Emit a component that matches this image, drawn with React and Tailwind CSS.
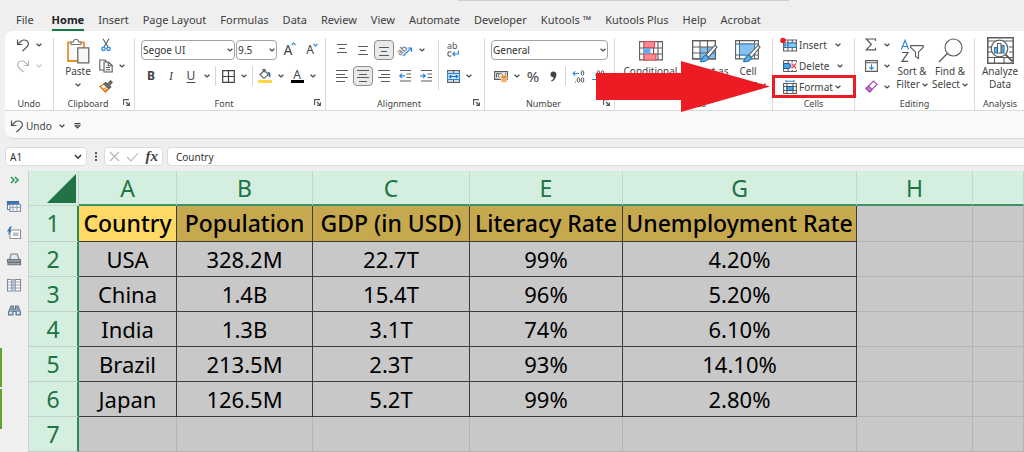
import React from "react";

const TABS = ["File", "Home", "Insert", "Page Layout", "Formulas", "Data", "Review", "View", "Automate", "Developer", "Kutools ™", "Kutools Plus", "Help", "Acrobat"];

const COLUMNS = ["A", "B", "C", "E", "G", "H", ""];

const ROWS = [
  ["Country", "Population", "GDP (in USD)", "Literacy Rate", "Unemployment Rate"],
  ["USA", "328.2M", "22.7T", "99%", "4.20%"],
  ["China", "1.4B", "15.4T", "96%", "5.20%"],
  ["India", "1.3B", "3.1T", "74%", "6.10%"],
  ["Brazil", "213.5M", "2.3T", "93%", "14.10%"],
  ["Japan", "126.5M", "5.2T", "99%", "2.80%"],
  [],
];

function Svg({ w, h, children, className = "" }) {
  return (
    <svg width={w} height={h} viewBox={`0 0 ${w} ${h}`} fill="none" stroke="#5c5c5c" strokeWidth="1.1" className={`shrink-0 overflow-visible ${className}`} aria-hidden="true">
      {children}
    </svg>
  );
}

function Chevron({ color = "#444" }) {
  return (
    <Svg w={6} h={4}>
      <path d="M.6.7 3 3 5.400.7" stroke={color} strokeWidth="1.2" />
    </Svg>
  );
}

function Drop({ label, color }) {
  return (
    <button aria-label={label} className="flex h-5 w-3 shrink-0 items-center justify-center">
      <Chevron color={color} />
    </button>
  );
}

function Tool({ label, active, children }) {
  return (
    <button
      aria-label={label}
      className={`flex h-5 w-5 shrink-0 items-center justify-center ${active ? "rounded border border-[#8f8f8f] bg-[#e9e9e9]" : ""}`}
    >
      {children}
    </button>
  );
}

function Rule({ className = "h-5" }) {
  return <div className={`mx-0.5 w-px shrink-0 bg-[#d6d6d6] ${className}`} />;
}

function Combo({ label, value, className }) {
  return (
    <div className={`relative h-5 shrink-0 ${className}`}>
      <select aria-label={label} className="block h-full w-full appearance-none rounded border border-[#a3a3a3] bg-white pl-px text-[10px] leading-4 text-[#333]">
        <option>{value}</option>
      </select>
      <span className="pointer-events-none absolute inset-y-0 right-0.5 flex items-center">
        <Chevron />
      </span>
    </div>
  );
}

function Group({ title, className, launcher, children }) {
  return (
    <section aria-label={title} className={`relative flex shrink-0 flex-col ${className}`}>
      <div className="flex h-[63px]">{children}</div>
      <div className={`flex h-3.5 items-center justify-center text-[9px] leading-none text-[#444] ${launcher ? "pr-3" : ""}`}>{title}</div>
      {launcher && (
        <button aria-label={`${title} settings`} className="absolute right-1 bottom-1">
          <Svg w={7} h={7} className="block">
            <path d="M.6 6V.6H6M3 3l3 3M6.4 3.2v3.2H3.2" stroke="#555" />
          </Svg>
        </button>
      )}
    </section>
  );
}

function Divider() {
  return <div className="mt-1 h-[73px] w-px shrink-0 bg-[#d9d9d9]" />;
}

function BigButton({ icon, lines, drop, className = "" }) {
  return (
    <button className={`flex shrink-0 flex-col items-center text-[10px] leading-[13px] text-[#444] ${className}`}>
      <span className="flex h-[29px] items-center">{icon}</span>
      <span className="whitespace-nowrap">{lines[0]}</span>
      <span className="flex h-[13px] items-center gap-0.5 whitespace-nowrap">
        {lines[1]}
        {drop && <Chevron />}
      </span>
    </button>
  );
}

function UndoIcon() {
  return (
    <Svg w={14} h={14}>
      <path d="M1.5 1.5v5h5M1.8 6.2 5 3.2C7.500 1 12.400 2 12.400 5.800c0 3-3.400 4.600-6 7.200" stroke="#555" strokeWidth="1.2" />
    </Svg>
  );
}

function RedoIcon() {
  return (
    <Svg w={14} h={14}>
      <path d="M12.500 1.500v5h-5M12.200 6.200 9 3.200C6.500 1 1.600 2 1.600 5.800c0 3 3.400 4.600 6 7.200" stroke="#b9b9b9" strokeWidth="1.2" />
    </Svg>
  );
}

function PasteIcon() {
  return (
    <Svg w={24} h={26}>
      <path d="M2 4.500h16V23H2z" fill="#fff" stroke="#e8912d" strokeWidth="1.800" />
      <path d="M4.500 6.500h11v14h-11z" fill="#fafafa" stroke="none" />
      <path d="M5 6.500V4h2.500c.2-3.600 4.800-3.600 5 0H15v2.500z" fill="#fff" stroke="#777" />
      <path d="M11.800 9.800h11v15h-11z" fill="#f7f7f7" stroke="#666" strokeWidth="1.300" />
    </Svg>
  );
}

function CutIcon() {
  return (
    <Svg w={10} h={14}>
      <path d="M2 .8 7 9M8 .8 3 9" />
      <circle cx="2.500" cy="10.800" r="1.700" stroke="#2b88d8" strokeWidth="1.300" />
      <circle cx="7.500" cy="10.800" r="1.700" stroke="#2b88d8" strokeWidth="1.300" />
    </Svg>
  );
}

function CopyIcon() {
  return (
    <Svg w={14} h={14}>
      <path d="M5 11H.8V1H6l1 1v1" />
      <path d="M5 3h4.500l3.700 3.500V13H5z" fill="#f4f4f4" />
      <path d="M9.300 3v3.700h3.900M7 8.500h4M7 10.700h4" />
    </Svg>
  );
}

function PainterIcon() {
  return (
    <Svg w={14} h={13}>
      <path d="M1 6.500 5 4l5 4.500L6.500 12z" fill="#fff" stroke="#e07b1a" strokeWidth="1.300" />
      <path d="m3.500 9.500 4-2M5 11l3.500-2" stroke="#e07b1a" />
      <path d="m5 4 1.700-1.500L8.500 4 11.600.8l1.600 1.400-2.700 3.300 1.300 1.500L10 8.500z" fill="#777" />
    </Svg>
  );
}

function LettersA({ up }) {
  return (
    <span className="relative flex items-center text-[#444]">
      <span className={up ? "text-[14px] leading-none" : "text-[12px] leading-none"}>A</span>
      <Svg w={5} h={4} className="absolute -top-px -right-1">
        <path d={up ? "M.6 3 2.500 1l1.900 2" : "M.6 1l1.900 2L4.400 1"} stroke="#2b88d8" />
      </Svg>
    </span>
  );
}

function BordersIcon() {
  return (
    <Svg w={13} h={13}>
      <path d="M.7.7h11.600v11.600H.7zM6.500.7v11.600M.7 6.500h11.600" stroke="#444" strokeWidth="1.200" />
    </Svg>
  );
}

function FillIcon() {
  return (
    <Svg w={14} h={14}>
      <path d="m2 5.500 4.500-4 4 4L6 9.300z" fill="#fff" />
      <path d="M5 3V.6h2v3" />
      <path d="M10 3.500c1.500 0 2 1.500 1.500 4.500" stroke="#1f5f9e" strokeWidth="1.500" />
      <path d="M0 11h14v3H0z" fill="#ffd54a" stroke="none" />
    </Svg>
  );
}

function FontColorIcon() {
  return (
    <span className="flex flex-col items-center">
      <span className="text-[12px] leading-[11px] text-[#444]">A</span>
      <span className="h-[3px] w-[13px] bg-black" />
    </span>
  );
}

function LinesIcon({ rows }) {
  return (
    <Svg w={12} h={12}>
      {rows.map(([x1, x2, y]) => (
        <path key={y} d={`M${x1} ${y}.500H${x2}`} stroke="#5a5a5a" strokeWidth="1" />
      ))}
    </Svg>
  );
}

function IndentIcon({ inward }) {
  return (
    <Svg w={13} h={12}>
      <path d="M1 .5h11M7.500 4h4.500M7.500 7.500h4.500M1 11h11" />
      <path d={inward ? "M0 5.800h5M3 3.600l2.300 2.200L3 8" : "M6 5.800H1M3 3.600.7 5.800 3 8"} stroke="#2b88d8" strokeWidth="1.200" />
    </Svg>
  );
}

function OrientationIcon() {
  return (
    <Svg w={15} h={13}>
      <text x="0" y="9" fontSize="9" fill="#555" stroke="none" transform="rotate(-42 5 8)">ab</text>
      <path d="M5 12 13 4.500M9.500 4h4v4" stroke="#2b88d8" strokeWidth="1.200" />
    </Svg>
  );
}

function WrapIcon() {
  return (
    <Svg w={12} h={14}>
      <text x="0" y="6" fontSize="9" fill="#555" stroke="none">ab</text>
      <path d="M4.300 9.200C2.600 8.200.8 9.200.8 11s1.800 2.800 3.500 1.800" stroke="#555" />
      <path d="M11.300 7.500v3.500H6M8 8.800l-2.200 2.200L8 13.200" stroke="#2b88d8" strokeWidth="1.200" />
    </Svg>
  );
}

function MergeIcon() {
  return (
    <Svg w={13} h={13}>
      <path d="M.6.6h11.800v11.800H.6zM6.500.6v3M6.500 9.400v3" />
      <path d="M.6 3.400h11.800v6.200H.6z" fill="#cfe6f8" stroke="#2b88d8" />
      <path d="M2.500 6.500h8M4.200 4.800 2.500 6.500l1.700 1.700M8.800 4.800l1.700 1.700-1.700 1.700" stroke="#1c6fb8" />
    </Svg>
  );
}

function CurrencyIcon() {
  return (
    <Svg w={14} h={13}>
      <path d="M.6 1.600h12.800v7.800H.6z" fill="#eee" />
      <path d="M2.500 3.500v4M5 3.500h-2.500M5.500 7.500c-2-1-1-4 1-4s3 2 2 4M11.500 3.500v3" strokeWidth="1" />
      <path d="M7 6.500c0-2 6-2 6 0v4.500c0 2-6 2-6 0z" fill="#ee8a28" stroke="#fff" strokeWidth=".6" />
      <path d="M7.500 8.300c1 .9 4 .9 5 0M7.500 10.300c1 .9 4 .9 5 0" stroke="#fff" strokeWidth=".7" />
    </Svg>
  );
}

function Zero({ x, y }) {
  return <ellipse cx={x + 1.5} cy={y + 2.5} rx="1.3" ry="2.300" stroke="#555" strokeWidth="1" />;
}

function DecimalIcon({ more }) {
  return (
    <Svg w={13} h={13}>
      {more ? (
        <>
          <path d="M7 3.500H1M3.200 1.300 1 3.500l2.200 2.200" stroke="#2b88d8" />
          <Zero x={9} y={0.5} />
          <Zero x={5} y={7.5} />
          <Zero x={9} y={7.5} />
          <path d="M3 12h1" />
        </>
      ) : (
        <>
          <Zero x={5} y={0.5} />
          <Zero x={9} y={0.5} />
          <Zero x={9} y={7.5} />
          <path d="M3 5h1M7.500 12h1" />
          <path d="M0 9.500h6M4 7.300l2.200 2.200L4 11.700" stroke="#2b88d8" />
        </>
      )}
    </Svg>
  );
}

function ConditionalIcon() {
  return (
    <Svg w={24} h={20}>
      <path d="M.6.6h22.800v18.300H.6zM5 .6v18.300M14.500.6v18.300M19 .6v18.300M.6 7h22.800M.6 13h22.800" />
      <path d="M5 .6h10.500v6H5zM5 13h12v6H5z" fill="#ff8a8f" stroke="#e04c55" />
      <path d="M5 7.200h6.500v5.500H5z" fill="#5fb0ea" stroke="none" />
    </Svg>
  );
}

function Brush() {
  return (
    <>
      <path d="M14 16 23 6.200l2 1.800-8.500 10.500z" fill="#fff" stroke="#555" />
      <path d="M8 22.200c2.500-.3 1.500-5 5.200-5.700 2.300-.2 4 2.200 2.500 4-1.700 2.200-5 2.500-7.700 1.700z" fill="#5aaeea" stroke="#2170ad" />
    </>
  );
}

function TableBrushIcon() {
  return (
    <Svg w={26} h={24}>
      <path d="M.6 1.600h22.800v18.300H.6z" fill="#fff" />
      <path d="M8 8h15.400v11.900H8z" fill="#84c1f0" stroke="none" />
      <path d="M.6 8h22.800M.6 14h22.800M8 1.600v18.300M15.500 1.600v18.300M.6 1.600h22.800v18.300H.6z" />
      <Brush />
    </Svg>
  );
}

function CellBrushIcon() {
  return (
    <Svg w={26} h={24}>
      <path d="M.6 1.600h22.800v18.300H.6zM.6 5h22.800M.6 16h22.800M4.500 1.600v18.300M19.500 1.600v18.300" />
      <path d="M4.500 5h15v11h-15z" fill="#84c1f0" stroke="#3585c6" />
      <Brush />
    </Svg>
  );
}

function InsertCellsIcon() {
  return (
    <Svg w={16} h={14}>
      <path d="M2.600 2h12.800v11H2.600zM2.600 5h12.800M2.600 9.500h12.800M7 2v11M11.200 2v11" />
      <path d="M7 5h8.400v4.500H7z" fill="#8cc6f2" stroke="#2b78b8" />
      <path d="M7.500 7.300H3M5 5.300 3 7.300l2 2" stroke="#2b88d8" />
      <circle cx="2" cy="2.500" r="2.800" fill="#ed1c24" stroke="none" />
    </Svg>
  );
}

function DeleteCellsIcon() {
  return (
    <Svg w={16} h={14}>
      <path d="M2.600 1.500h12.800M2.600 12.500h12.800M2.600 1.500v3M7 1.500v3M11.200 1.500v2M15.400 1.500v2M2.600 9.500v3M7 9.500v3M11.200 11v1.500M15.400 11v1.500" />
      <path d="M2.600 4.500h5.500L10 7 8.100 9.500H2.600z" fill="#4ea4e2" stroke="#1d5f9a" />
      <path d="m10.500 4.500 4.500 5M15 4.500l-4.500 5" stroke="#e5484d" strokeWidth="1.200" />
    </Svg>
  );
}

function FormatCellsIcon() {
  return (
    <Svg w={16} h={14}>
      <path d="M2.600 3.500h12.800v10H2.600zM2.600 6.500h12.800M2.600 10.500h12.800M6 3.500v10M12 3.500v10" />
      <path d="M6 6.500h6v4H6z" fill="#4ea4e2" stroke="#1d5f9a" />
      <path d="M5 1.200h8M5 0v2.500M13 0v2.500" stroke="#2b88d8" />
    </Svg>
  );
}

function SumIcon() {
  return (
    <Svg w={12} h={13}>
      <path d="M10.500 3V1H1.300l5 5.300-5 5.500h9.200v-2" stroke="#555" strokeWidth="1.200" />
    </Svg>
  );
}

function FillDownIcon() {
  return (
    <Svg w={13} h={12}>
      <path d="M.6.6h11.800v10.800H.6zM.6 2.800h11.800" />
      <path d="M6.500 4.200v5M4.300 7.200l2.200 2.200 2.200-2.200" stroke="#2b88d8" strokeWidth="1.200" />
    </Svg>
  );
}

function EraserIcon() {
  return (
    <Svg w={13} h={13}>
      <path d="M1 8.500 8.500 1 12 4.200 4.800 12z" fill="#fff" stroke="#a04ab0" />
      <path d="M1 8.500 3.500 6l3.700 3.400L4.800 12z" fill="#c77fd3" stroke="#a04ab0" />
    </Svg>
  );
}

function SortFilterIcon() {
  return (
    <Svg w={24} h={24}>
      <path d="M1.300 10.500 5 1.300l3.700 9.200M2.600 7.500h4.800" stroke="#2b88d8" strokeWidth="1.200" />
      <path d="M2 13.500h6L2 22.300h6.200" stroke="#555" strokeWidth="1.200" />
      <path d="M10.500 6.600h12.700v1.600l-4.700 5v6.300l-3-2v-4.300l-5-5z" fill="#fff" />
    </Svg>
  );
}

function FindIcon() {
  return (
    <Svg w={25} h={25}>
      <circle cx="15.500" cy="9.500" r="8.500" fill="#fdfdfd" />
      <path d="M9.300 15.500 1 24" strokeWidth="1.300" />
    </Svg>
  );
}

function AnalyzeIcon() {
  return (
    <Svg w={27} h={27}>
      <path d="M.8.8h25.400v25.400H.8z" fill="#fff" strokeWidth="1.500" />
      <path d="M.8 4h25.400M.8 10h4M.8 15h5M.8 20.500h25.400M7.500 20v6M17 20v6M22 10h4M22 15h4" />
      <circle cx="12.500" cy="11.500" r="8.300" fill="#fff" strokeWidth="1.200" />
      <path d="m18.500 17.500 7 7" strokeWidth="1.800" />
      <path d="M7.500 10.500h3V16h-3zM14 8.500h3V16h-3z" fill="#5fb0ea" stroke="#2b78b8" />
      <path d="M10.500 6.500H14V16h-3.500z" fill="#fff" />
    </Svg>
  );
}

const ALIGN = {
  top: [[1, 11, 0], [3, 9, 4], [1, 11, 8]],
  middle: [[1, 11, 2], [3, 9, 6], [1, 11, 10]],
  bottom: [[1, 11, 3], [3, 9, 7], [1, 11, 11]],
  left: [[0, 12, 0], [0, 9, 4], [0, 12, 7], [0, 9, 11]],
  center: [[0, 12, 0], [2, 10, 4], [0, 12, 7], [2, 10, 11]],
  right: [[0, 12, 0], [3, 12, 4], [0, 12, 7], [3, 12, 11]],
};

function CellAction({ icon, label, wide }) {
  return (
    <button className={`flex h-[21px] items-center text-[10px] leading-none text-[#444] ${wide ? "gap-2" : "gap-0.5"}`}>
      <span className="flex items-center gap-0.5">
        {icon}
        {label}
      </span>
      <Chevron />
    </button>
  );
}

function Ribbon() {
  return (
    <div className="relative flex h-20 rounded-tl-lg border-b border-[#dadada] bg-white pt-[3px]">
      <Group title="Undo" className="w-12">
        <div className="flex flex-col pl-2">
          <div className="flex h-[21px] items-center">
            <Tool label="Undo"><UndoIcon /></Tool>
            <Drop label="Undo history" />
          </div>
          <div className="flex h-[21px] items-center">
            <Tool label="Redo"><RedoIcon /></Tool>
            <Drop label="Redo history" color="#c4c4c4" />
          </div>
        </div>
      </Group>
      <Divider />
      <Group title="Clipboard" className="w-20" launcher>
        <BigButton className="ml-2.5 w-7 pt-0.5" icon={<PasteIcon />} lines={["Paste", ""]} drop />
        <div className="flex flex-col pl-1">
          <div className="flex h-[21px] items-center"><Tool label="Cut"><CutIcon /></Tool></div>
          <div className="flex h-[21px] items-center"><Tool label="Copy"><CopyIcon /></Tool><Drop label="Copy options" /></div>
          <div className="flex h-[21px] items-center"><Tool label="Format Painter"><PainterIcon /></Tool></div>
        </div>
      </Group>
      <Divider />
      <Group title="Font" className="w-[190px]" launcher>
        <div className="flex flex-col gap-1.5 pt-1.5 pl-1.5">
          <div className="flex items-center gap-px">
            <Combo label="Font name" value="Segoe UI" className="w-[94px]" />
            <Combo label="Font size" value="9.5" className="w-[41px]" />
            <div className="flex gap-0.5">
              <Tool label="Increase font size"><LettersA up /></Tool>
              <Tool label="Decrease font size"><LettersA /></Tool>
            </div>
          </div>
          <div className="flex items-center text-[12px] leading-none text-[#444]">
            <Tool label="Bold"><b>B</b></Tool>
            <Tool label="Italic"><i className="font-['Liberation_Serif',serif]">I</i></Tool>
            <Tool label="Underline"><u className="underline-offset-2">U</u></Tool>
            <Drop label="Underline style" />
            <Rule />
            <Tool label="Borders"><BordersIcon /></Tool>
            <Drop label="Border style" />
            <Rule />
            <Tool label="Fill color"><FillIcon /></Tool>
            <Drop label="Fill color choices" />
            <Tool label="Font color"><FontColorIcon /></Tool>
            <Drop label="Font color choices" />
          </div>
        </div>
      </Group>
      <Divider />
      <Group title="Alignment" className="w-[158px]" launcher>
        <div className="flex flex-col gap-1.5 pt-1.5 pl-1.5">
          <div className="flex gap-px">
            <Tool label="Top align"><LinesIcon rows={ALIGN.top} /></Tool>
            <Tool label="Middle align"><LinesIcon rows={ALIGN.middle} /></Tool>
            <Tool label="Bottom align" active><LinesIcon rows={ALIGN.bottom} /></Tool>
            <Tool label="Orientation"><OrientationIcon /></Tool>
            <Drop label="Orientation choices" />
          </div>
          <div className="flex gap-px">
            <Tool label="Align left"><LinesIcon rows={ALIGN.left} /></Tool>
            <Tool label="Center" active><LinesIcon rows={ALIGN.center} /></Tool>
            <Tool label="Align right"><LinesIcon rows={ALIGN.right} /></Tool>
            <Tool label="Decrease indent"><IndentIcon /></Tool>
            <Tool label="Increase indent"><IndentIcon inward /></Tool>
          </div>
        </div>
        <Rule className="mt-1.5 h-[50px]" />
        <div className="flex flex-col gap-1.5 pt-1.5 pl-0.5">
          <Tool label="Wrap text"><WrapIcon /></Tool>
          <div className="flex"><Tool label="Merge and center"><MergeIcon /></Tool><Drop label="Merge choices" /></div>
        </div>
      </Group>
      <Divider />
      <Group title="Number" className="w-[129px]" launcher>
        <div className="flex flex-col gap-1.5 pt-1.5 pl-1.5">
          <Combo label="Number format" value="General" className="w-[117px]" />
          <div className="flex items-center text-[#444]">
            <Tool label="Accounting format"><CurrencyIcon /></Tool>
            <Drop label="Accounting choices" />
            <Tool label="Percent style"><span className="text-[15px] leading-none">%</span></Tool>
            <Tool label="Comma style">
              <Svg w={7} h={11}>
                <path d="M3.300.5c2.400 0 3.400 1.600 3 4C5.900 7.500 4 9.800 1.500 10.500l-.4-.9C2.600 8.900 3.500 7.800 3.700 6.200 1.800 6.600.5 5.200.5 3.500.5 1.800 1.700.5 3.300.5z" fill="#444" stroke="none" />
              </Svg>
            </Tool>
            <Rule />
            <Tool label="Increase decimal"><DecimalIcon more /></Tool>
            <Tool label="Decrease decimal"><DecimalIcon /></Tool>
          </div>
        </div>
      </Group>
      <Divider />
      <Group title="Styles" className="w-[157px]">
        <div className="flex pt-0.5 pl-1.5">
          <BigButton className="w-[59px]" icon={<ConditionalIcon />} lines={["Conditional", "Formatting"]} drop />
          <BigButton className="w-[50px]" icon={<TableBrushIcon />} lines={["Format as", "Table"]} drop />
          <BigButton className="w-9" icon={<CellBrushIcon />} lines={["Cell", "Styles"]} drop />
        </div>
      </Group>
      <Divider />
      <Group title="Cells" className="w-[81px]">
        <div className="flex flex-col items-start pl-2">
          <CellAction icon={<InsertCellsIcon />} label="Insert" wide />
          <CellAction icon={<DeleteCellsIcon />} label="Delete" wide />
          <CellAction icon={<FormatCellsIcon />} label="Format" />
        </div>
        <div className="pointer-events-none absolute top-[41px] -left-px h-[23px] w-[84px] border-3 border-[#ed1c24]" />
        <svg width="174" height="52" viewBox="0 0 174 52" className="pointer-events-none absolute top-[27px] right-[84px]" aria-hidden="true">
          <path d="M0 12h85V0l89 25.500L85 51V39H0z" fill="#ed1c24" />
        </svg>
      </Group>
      <Divider />
      <Group title="Editing" className="w-[119px]">
        <div className="flex flex-col pl-1.5">
          <div className="flex h-[21px] items-center"><Tool label="AutoSum"><SumIcon /></Tool><Drop label="AutoSum choices" /></div>
          <div className="flex h-[21px] items-center"><Tool label="Fill"><FillDownIcon /></Tool><Drop label="Fill choices" /></div>
          <div className="flex h-[21px] items-center"><Tool label="Clear"><EraserIcon /></Tool><Drop label="Clear choices" /></div>
        </div>
        <div className="flex pt-0.5">
          <BigButton className="w-[38px]" icon={<SortFilterIcon />} lines={["Sort &", "Filter"]} drop />
          <BigButton className="w-[38px]" icon={<FindIcon />} lines={["Find &", "Select"]} drop />
        </div>
      </Group>
      <Divider />
      <Group title="Analysis" className="w-[50px]">
        <BigButton className="w-full pt-0.5" icon={<AnalyzeIcon />} lines={["Analyze", "Data"]} />
      </Group>
    </div>
  );
}

function FormulaBar() {
  return (
    <div className="flex h-[19px] items-stretch pl-[5px] text-[10px] leading-none text-[#333]">
      <div className="flex w-[82px] items-center rounded border border-[#dcdcdc] bg-white pr-1">
        <input aria-label="Name box" defaultValue="A1" className="min-w-0 flex-1 bg-transparent pl-1 leading-4 outline-none" />
        <Svg w={8} h={6}><path d="m1 1 3 3.200L7 1" stroke="#333" strokeWidth="1.500" /></Svg>
      </div>
      <Svg w={17} h={19}>
        <path d="M8 5h2v2H8zM8 8.500h2v2H8zM8 12h2v2H8z" fill="#555" stroke="none" />
      </Svg>
      <div className="flex w-[59px] items-center justify-between rounded border border-[#dcdcdc] bg-white px-1">
        <button aria-label="Cancel"><Svg w={11} h={11}><path d="m1 1 9 9M10 1l-9 9" stroke="#b5b5b5" /></Svg></button>
        <button aria-label="Enter"><Svg w={13} h={10}><path d="m1 5 4 4 7-8" stroke="#b5b5b5" /></Svg></button>
        <button aria-label="Insert function" className="font-['Liberation_Serif',serif] text-[15px] leading-none font-bold text-[#444] italic">fx</button>
      </div>
      <input aria-label="Formula bar" defaultValue="Country" className="ml-1 min-w-0 flex-1 rounded-l border border-r-0 border-[#dcdcdc] bg-white pl-2 leading-4 outline-none" />
    </div>
  );
}

function SideBar() {
  return (
    <aside className="relative flex w-[29px] shrink-0 flex-col items-center gap-[13px] border-r border-[#cfcfcf] pt-0.5">
      <button aria-label="Expand pane" className="flex h-3.5 items-center">
        <Svg w={9} h={8}><path d="m1 1 3 3-3 3M5 1l3 3-3 3" stroke="#2b9a62" strokeWidth="1.600" /></Svg>
      </button>
      <button aria-label="Workbooks">
        <Svg w={14} h={13}>
          <path d="M.5 1.500h11v8H.5z" fill="#fff" stroke="#6b7f99" />
          <path d="M.5 1.500h11v3H.5z" fill="#3d76b8" stroke="#3d6ea8" />
          <path d="M3 4.500h10.500v7H3z" fill="#f3f6fa" stroke="#8593a5" />
          <path d="M6 4.500v7M10 4.500v7M3 7.500h10.500" stroke="#9aa6b5" />
        </Svg>
      </button>
      <button aria-label="AutoText">
        <Svg w={14} h={14}>
          <path d="M3 4h10.500v8.500H3z" fill="#fff" stroke="#8a8f96" />
          <path d="M6 6.500h5.500V10H6z" fill="#b9bec5" stroke="none" />
          <path d="M3 .5 0 5.500h2L.8 9.500l4-5H2.800L5 .5z" fill="#2e75b6" stroke="none" />
        </Svg>
      </button>
      <button aria-label="Names">
        <Svg w={14} h={13}>
          <path d="M4 1h6l2.500 6h-10z" fill="#e6e8eb" stroke="#7b828b" />
          <path d="M.5 6.500h13V9H.5zM1 9.500h12.500v2.300H1z" fill="#9aa2ad" stroke="#6d747d" />
        </Svg>
      </button>
      <button aria-label="Columns">
        <Svg w={14} h={13}>
          <path d="M.5.500h13v11.500H.5z" fill="#fff" stroke="#7f8791" />
          <path d="M4.500.500H8V12H4.500z" fill="#b8cbe0" stroke="none" />
          <path d="M4.500.500V12M8.500.500V12M.5 3h13M.5 6h13M.5 9h13" stroke="#99a1ab" />
        </Svg>
      </button>
      <button aria-label="Find and replace">
        <Svg w={13} h={11}>
          <path d="M3 1h2.500v3h2V1H10l2.500 6v3H8V6.500H5V10H.5V7z" fill="#8ea3bb" stroke="#66788c" />
          <path d="M1.500 7h2.500v2H1.500zM9 7h2.500v2H9z" fill="#dce6f0" stroke="none" />
        </Svg>
      </button>
      <div className="absolute top-[177px] left-0 flex w-0.5 flex-col gap-0.5">
        <div className="h-[39px] bg-[#5fa52d]" />
        <div className="h-10 bg-[#5fa52d]" />
      </div>
    </aside>
  );
}

function Sheet() {
  return (
    <table className="w-full table-fixed border-separate border-spacing-0 bg-[#c8c8c8] text-center text-[22px] leading-none text-black">
      <colgroup>
        <col className="w-[50px]" />
        <col className="w-[98px]" />
        <col className="w-[136px]" />
        <col className="w-[157px]" />
        <col className="w-[153px]" />
        <col className="w-[234px]" />
        <col className="w-[116px]" />
        <col />
      </colgroup>
      <thead>
        <tr className="h-[35px] bg-[#d4efe0] text-[23px] text-[#217346]">
          <th aria-label="Select all" className="border-r border-b border-[#c4d6cc] p-0">
            <Svg w={29} h={29} className="ml-[18px]"><path d="M29 0v29H0z" fill="#217346" stroke="none" /></Svg>
          </th>
          {COLUMNS.map((c, i) => (
            <th key={i} className="border-r border-b-2 border-r-[#c3d9cd] border-b-[#3f9268] p-0 pt-0.5 font-normal">{c}</th>
          ))}
        </tr>
      </thead>
      <tbody>
        {ROWS.map((row, r) => (
          <tr key={r} className={r === 0 ? "h-9" : "h-[35px]"}>
            <th className="border-r-2 border-b border-r-[#2f8a5b] border-b-[#c3d0c9] bg-[#d4efe0] p-0 text-[23px] font-normal text-[#217346]">{r + 1}</th>
            {COLUMNS.map((_, c) => {
              const filled = row[c] !== undefined;
              const fill = r > 0 || !filled ? "" : c === 0 ? "bg-[#ffd966] text-[23px] font-medium" : "bg-[#c6a94f] text-[23px] font-medium";
              return (
                <td key={c} className={`border-r border-b p-0 whitespace-nowrap ${filled ? "border-[#3c3c3c]" : "border-[#b4b4b4]"} ${fill}`}>{row[c]}</td>
              );
            })}
          </tr>
        ))}
      </tbody>
    </table>
  );
}

export default function App() {
  return (
    <main className="min-h-screen overflow-hidden bg-[#efefef] font-['Noto_Sans','Open_Sans',sans-serif]">
      <div className="flex h-[31px] flex-col">
        <div className="ml-[458px] h-px w-[331px] bg-[#cfcfcf]" />
        <nav className="flex flex-1 items-center gap-3.5 pt-2 pl-4 text-[11px] leading-none whitespace-nowrap text-[#404040]">
          {TABS.map((t) => (
            <a key={t} href="#" className={t === "Home" ? "ml-1 border-b-2 border-[#107c41] pt-1 pb-1 font-bold text-[#222]" : "pb-0.5"}>{t}</a>
          ))}
        </nav>
      </div>
      <div className="ml-[5px]">
        <Ribbon />
        <div className="flex h-7 items-center rounded-bl-lg border-b border-[#d8d8d8] bg-[#fafafa] pt-0.5 pl-[5px] text-[10px] leading-none text-[#444]">
          <button className="flex items-center gap-0.5"><UndoIcon />Undo</button>
          <span className="flex items-center pl-1">
            <Drop label="Undo history" />
            <button aria-label="Customize toolbar" className="ml-1.5">
              <Svg w={7} h={6}><path d="M.5.600h6M1.300 2.800l2.200 2.200 2.200-2.200z" stroke="#444" /></Svg>
            </button>
          </span>
        </div>
      </div>
      <div className="pt-2 pb-[5px]">
        <FormulaBar />
      </div>
      <div className="flex">
        <SideBar />
        <div className="min-w-0 flex-1"><Sheet /></div>
      </div>
    </main>
  );
}
